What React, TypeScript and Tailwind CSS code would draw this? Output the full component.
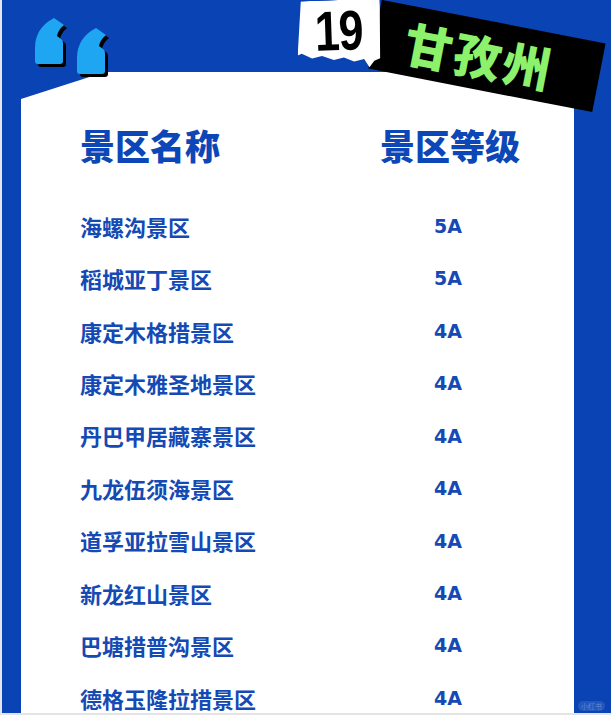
const spots: [string, string][] = [
  ["海螺沟景区", "5A"],
  ["稻城亚丁景区", "5A"],
  ["康定木格措景区", "4A"],
  ["康定木雅圣地景区", "4A"],
  ["丹巴甲居藏寨景区", "4A"],
  ["九龙伍须海景区", "4A"],
  ["道孚亚拉雪山景区", "4A"],
  ["新龙红山景区", "4A"],
  ["巴塘措普沟景区", "4A"],
  ["德格玉隆拉措景区", "4A"],
];

const cjk = "font-['Noto_Sans_CJK_SC','Noto_Sans',sans-serif]";

// one quote blob, drawn in local coords
const QUOTE = "M5 34 Q5 14 24 4 L34 11 Q28 16 27 22 L31 25 Q33 26 33 29 L33 47 Q33 50 30 50 L8 50 Q5 50 5 47 Z";

function Quotes() {
  return (
    <svg
      className="absolute left-[28px] top-[14px]"
      width="90"
      height="76"
      viewBox="0 0 90 76"
    >
      <g transform="translate(3 3)">
        <path d={QUOTE} fill="#000" />
        <path d={QUOTE} fill="#000" transform="translate(42 10)" />
      </g>
      <path d={QUOTE} fill="#1fa6f3" />
      <path d={QUOTE} fill="#1fa6f3" transform="translate(42 10)" />
    </svg>
  );
}

function Banner() {
  return (
    <>
      <div className="absolute left-[371px] top-[21px] w-[228px] h-[70px] bg-black rotate-[11deg] flex items-center justify-center">
        <span
          className={`${cjk} font-black text-[48px] leading-none text-[#8cf16b] tracking-[2px] -ml-[16px]`}
        >
          甘孜州
        </span>
      </div>
      <div className="absolute left-[295px] top-0 w-[84px] h-[72px] bg-white rotate-[-2deg] [clip-path:polygon(6%_0,100%_0,98%_83%,91%_86%,85%_95%,79%_83%,67%_86%,55%_80%,43%_83%,29%_77%,17%_80%,5%_73%,0_75%)] flex justify-center">
        <span className="font-['Liberation_Sans',sans-serif] font-black text-[56px] leading-none text-black mt-[3px] scale-x-[0.8] tracking-tight">
          19
        </span>
      </div>
    </>
  );
}

export default function App() {
  return (
    <div className="relative w-[611px] h-[715px] overflow-hidden bg-[#0a44b4] border-l-2 border-[#e2e6ee] flex flex-col">
      <div className="ml-[19px] mt-[72px] w-[553px] h-[641px] bg-white overflow-hidden [clip-path:polygon(0_27px,84px_0,400px_0,553px_28px,553px_100%,0_100%)]">
        <div className={`${cjk} pl-[59px] pt-[54px]`}>
          <div className="grid grid-cols-[300px_140px] text-[35px] leading-[38px] font-black text-[#0d46b6]">
            <span>景区名称</span>
            <span>景区等级</span>
          </div>
          <div className="mt-[36px]">
            {spots.map(([name, grade]) => (
              <div
                key={name}
                className="grid grid-cols-[300px_140px] h-[52.44px] items-center"
              >
                <span className="text-[22px] font-bold text-[#1549b4]">
                  {name}
                </span>
                <span className="text-center font-['DejaVu_Sans',sans-serif] font-bold text-[19px] text-[#1549b4] -ml-[4px]">
                  {grade}
                </span>
              </div>
            ))}
          </div>
        </div>
      </div>
      <div className="h-[2px] bg-[#e4e4e6]" />
      <Quotes />
      <Banner />
      <div className="absolute right-[6px] bottom-[4px] px-[3px] rounded-full bg-white/10 text-[7px] leading-[10px] text-white/30 font-['Noto_Sans_CJK_SC',sans-serif]">
        小红书
      </div>
    </div>
  );
}
